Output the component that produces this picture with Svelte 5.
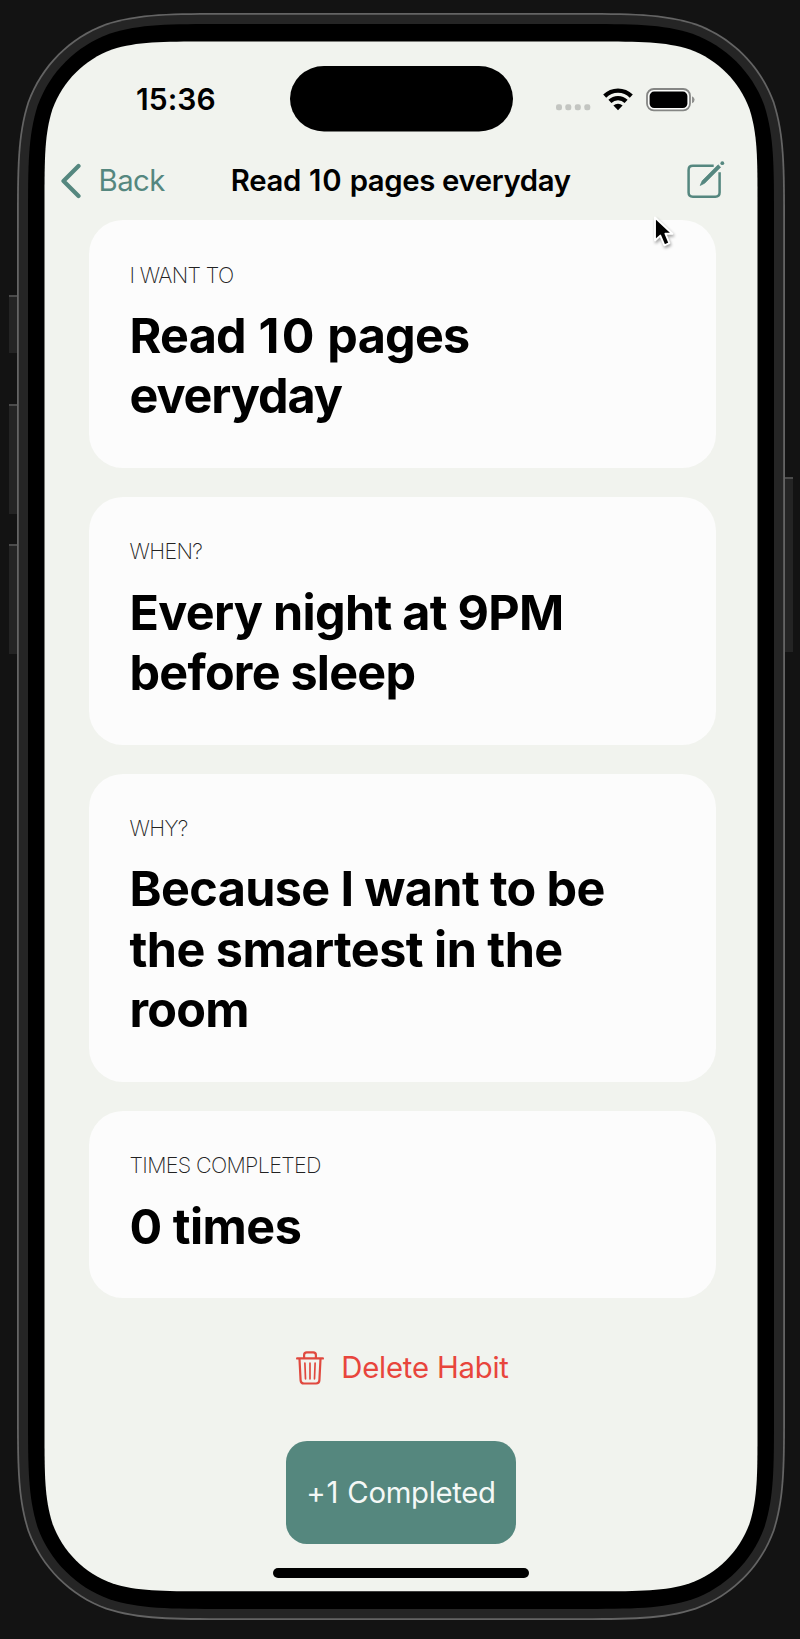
<script>
  const cards = [
    { label: 'I WANT TO', lines: [{ text: 'Read 10 pages', track: -0.75 }, { text: 'everyday', track: -1.1 }] },
    { label: 'WHEN?', lines: [{ text: 'Every night at 9PM', track: -0.7 }, { text: 'before sleep', track: -0.78 }] },
    { label: 'WHY?', lines: [{ text: 'Because I want to be', track: -0.62 }, { text: 'the smartest in the', track: -0.52 }, { text: 'room', track: -0.8 }] },
    { label: 'TIMES COMPLETED', lines: [{ text: '0 times', track: -0.5 }] },
  ];
  const sideButtons = [
    { side: 'left', top: 295, height: 58 },
    { side: 'left', top: 404, height: 110 },
    { side: 'left', top: 544, height: 110 },
    { side: 'right', top: 477, height: 175 },
  ];

  // Splits off a two-digit count so it can carry wider tracking.
  const parts = (text) => text.split(/(\d{2})/);

  // Continuous-curvature rounded rectangle. Each corner is three cubic
  // segments, given as multiples of the radius from the corner point.
  const curve = [
    [1.5287, 0], [1.0885, 0], [0.8684, 0], [0.6315, 0.0749],
    [0.3728, 0.1691], [0.1691, 0.3728], [0.0749, 0.6315],
    [0, 0.8684], [0, 1.0885], [0, 1.5287],
  ];
  function smoothRect(x0, y0, x1, y1, r) {
    const forward = curve;
    const back = [...curve].reverse();
    const corners = [
      [x1, y0, -1, 1, forward],
      [x1, y1, -1, -1, back],
      [x0, y1, 1, -1, forward],
      [x0, y0, 1, 1, back],
    ];
    let d = '';
    corners.forEach(([cx, cy, sx, sy, points], i) => {
      const p = points.map(([a, b]) => `${(cx + sx * a * r).toFixed(2)} ${(cy + sy * b * r).toFixed(2)}`);
      d += `${i ? 'L' : 'M'}${p[0]}C${p.slice(1).join(' ')}`;
    });
    return d + 'Z';
  }
</script>

<div class="stage">
  {#each sideButtons as b}
    <span class="side {b.side}" style="top:{b.top}px;height:{b.height}px"></span>
  {/each}
  <svg class="body" width="800" height="1639" viewBox="0 0 800 1639">
    <path d={smoothRect(17, 13, 785, 1620, 141)} fill="#646464" />
    <path d={smoothRect(18.8, 14.8, 783.2, 1618.2, 139)} fill="#252525" />
    <path d={smoothRect(28, 24, 774, 1609, 129)} fill="#000" />
    <path d={smoothRect(44.5, 41.5, 757.5, 1591.3, 107)} fill="#f1f3ee" />
  </svg>

  <div class="screen">
    <header class="status">
      <span class="time">15:36</span>
      <svg class="island" width="223" height="66" viewBox="0 0 223 66">
        <rect x="0" y="0" width="223" height="65.5" rx="34" ry="32.75" />
      </svg>
      <span class="indicators">
        <svg class="dots" width="35" height="7" viewBox="0 0 35 7" fill="#c3c5c1">
          <rect x="0" y="0.3" width="6" height="6" rx="2.2" />
          <rect x="9.3" y="0.3" width="6" height="6" rx="2.2" />
          <rect x="18.8" y="0.3" width="6" height="6" rx="2.2" />
          <rect x="28.3" y="0.3" width="6" height="6" rx="2.2" />
        </svg>
        <svg class="wifi" width="30" height="23" viewBox="0 0 30 23">
          <g fill="none" stroke="#000" stroke-width="4.3">
            <path d="M1.7 8.1A19 19 0 0 1 28.3 8.1" />
            <path d="M6.9 13.4A11.6 11.6 0 0 1 23.1 13.4" />
          </g>
          <path d="M10.4 17.6A6.6 6.6 0 0 1 19.6 17.6L15 22.3Z" />
        </svg>
        <svg class="battery" width="49" height="24" viewBox="0 0 49 24">
          <rect x="1" y="1" width="43" height="21.4" rx="6.8" fill="#fbfcfa" stroke="#858684" stroke-width="1.8" />
          <rect x="3.6" y="3.6" width="37.8" height="16.4" rx="4.5" />
          <path d="M46 8.2Q48.6 9.3 48.6 11.7Q48.6 14.2 46 15.3Z" fill="#8f908e" />
        </svg>
      </span>
    </header>

    <nav class="nav">
      <button class="back">
        <svg width="21" height="36" viewBox="0 0 21 36" fill="none" stroke="#55877f" stroke-width="4.2" stroke-linecap="round" stroke-linejoin="round">
          <path d="M17.5 3L2.5 18L17.5 33" />
        </svg>
        <span>Back</span>
      </button>
      <h1>Read <span class="count">10</span> pages everyday</h1>
      <button class="edit" aria-label="Edit">
        <svg width="38" height="38" viewBox="0 0 38 38">
          <path d="M26.7 4.7H5.8Q1.6 4.7 1.6 8.9V31.5Q1.6 35.7 5.8 35.7H28.4Q32.6 35.7 32.6 31.5V11.3" fill="none" stroke="#55877f" stroke-width="2.5" />
          <path d="M13.2 24.5L15.2 19.8L31.1 3.8L33.6 6.2L17.7 22.2Z" fill="#55877f" stroke="#55877f" stroke-width=".7" stroke-linejoin="round" />
          <circle cx="35.3" cy="2.2" r="1.9" fill="#55877f" />
        </svg>
      </button>
    </nav>

    <main>
      {#each cards as card}
        <section class="card">
          <p class="label">{card.label}</p>
          <h2>
            {#each card.lines as line}
              <span class="line" style="letter-spacing:{line.track}px">{#each parts(line.text) as part, i}{#if i % 2}<span class="big-count">{part}</span>{:else}{part}{/if}{/each}</span>
            {/each}
          </h2>
        </section>
      {/each}
    </main>

    <button class="delete">
      <svg width="28" height="35" viewBox="0 0 28 35" fill="none" stroke="#e0493f" stroke-width="2.2" stroke-linecap="round" stroke-linejoin="round">
        <path d="M1.2 7.4H26.8" stroke-width="2.4" />
        <path d="M8.1 7V4Q8.1 1.4 10.8 1.4H17.2Q19.9 1.4 19.9 4V7" />
        <path d="M3.5 8L4.6 29.4Q4.8 32.5 7.9 32.5H20.1Q23.2 32.5 23.4 29.4L24.5 8" />
        <path d="M8.9 12.2L9.5 27.8M14 12.2V27.8M19.1 12.2L18.5 27.8" stroke-width="1.7" />
      </svg>
      <span>Delete Habit</span>
    </button>

    <button class="complete">+<span class="count">1</span> Completed</button>
    <span class="home"></span>
  </div>

  <svg class="cursor" width="24" height="34" viewBox="0 0 24 34">
    <path d="M2 2.5V25.5L7.3 20.6L11.4 30.3L16.4 28.2L12.4 18.7H19.4Z" fill="#000" stroke="#fff" stroke-width="1.9" stroke-linejoin="round" />
  </svg>
</div>

<style>
  :global(body) {
    background: #131313;
  }
  .stage {
    position: relative;
    width: 800px;
    height: 1639px;
    overflow: hidden;
    box-sizing: border-box;
    padding: 41.5px 42.5px 0 44.5px;
    background: #131313;
    font-family: Inter, 'Liberation Sans', sans-serif;
    color: #000;
  }
  .body {
    position: absolute;
    left: 0;
    top: 0;
  }
  .side {
    position: absolute;
    width: 9px;
    box-sizing: border-box;
    background: #242424;
    border-top: 2px solid #4b4b4b;
  }
  .side.left {
    left: 9px;
  }
  .side.right {
    left: 784px;
  }
  .screen {
    position: relative;
    display: flex;
    flex-direction: column;
    align-items: center;
  }
  .count {
    margin-left: 1px;
    letter-spacing: 1px;
  }
  .big-count {
    margin-left: 2px;
    letter-spacing: 2.2px;
  }
  .status {
    width: 100%;
    height: 116.5px;
    box-sizing: border-box;
    padding-top: 24.5px;
    display: grid;
    grid-template-columns: 245px 223px 1fr;
    align-items: start;
  }
  .time {
    padding: 15px 0 0 91.5px;
    font-size: 30px;
    line-height: 36px;
    font-weight: 600;
    letter-spacing: 0.05px;
  }
  .indicators {
    display: flex;
    align-items: flex-start;
    padding: 21.5px 0 0 43px;
  }
  .dots {
    margin-top: 16px;
  }
  .wifi {
    margin-left: 12.5px;
  }
  .battery {
    margin-left: 13px;
  }
  .nav {
    width: 100%;
    height: 62px;
    box-sizing: border-box;
    padding: 0 33px 0 16px;
    display: grid;
    grid-template-columns: 170px 1fr 153.5px;
    align-items: start;
  }
  button {
    font: inherit;
    border: 0;
    padding: 0;
    margin: 0;
    background: none;
  }
  .back {
    display: flex;
    align-items: center;
    gap: 17px;
    padding-top: 5px;
    color: #55877f;
    font-size: 29.3px;
    line-height: 36px;
    letter-spacing: -0.5px;
  }
  h1 {
    margin: 0;
    padding-top: 5px;
    font-size: 29.3px;
    line-height: 36px;
    font-weight: 600;
    letter-spacing: -0.35px;
    white-space: nowrap;
    text-align: center;
  }
  .edit {
    justify-self: end;
    height: 38px;
    padding-top: 2.5px;
  }
  .edit svg {
    display: block;
  }
  main {
    width: 627px;
    margin-left: 2px;
    display: flex;
    flex-direction: column;
    gap: 28.8px;
  }
  .card {
    padding: 41.5px 42px 41.3px 41px;
    border-radius: 34px;
    background: #fcfcfc;
  }
  .label {
    margin: 0;
    font-size: 21.5px;
    line-height: 26px;
    font-weight: 250;
    letter-spacing: -0.65px;
    color: #222;
  }
  h2 {
    margin: 0;
    padding-top: 18.4px;
    font-size: 48.5px;
    line-height: 60.4px;
    font-weight: 700;
  }
  .line {
    display: block;
    white-space: nowrap;
  }
  .delete {
    display: flex;
    align-items: center;
    gap: 17px;
    margin-top: 52px;
    padding-left: 3px;
    color: #e8453c;
    font-size: 29.3px;
    line-height: 36px;
    letter-spacing: -0.2px;
  }
  .complete {
    width: 230px;
    height: 103px;
    margin-top: 55px;
    border-radius: 21px;
    background: #55877e;
    color: #f4f8f6;
    font-size: 29.3px;
    letter-spacing: -0.3px;
  }
  .home {
    width: 256px;
    height: 9.5px;
    margin-top: 24px;
    border-radius: 5px;
    background: #000;
  }
  .cursor {
    position: absolute;
    left: 653px;
    top: 215px;
    filter: drop-shadow(1px 2px 1.5px rgba(0, 0, 0, 0.35));
  }
</style>
